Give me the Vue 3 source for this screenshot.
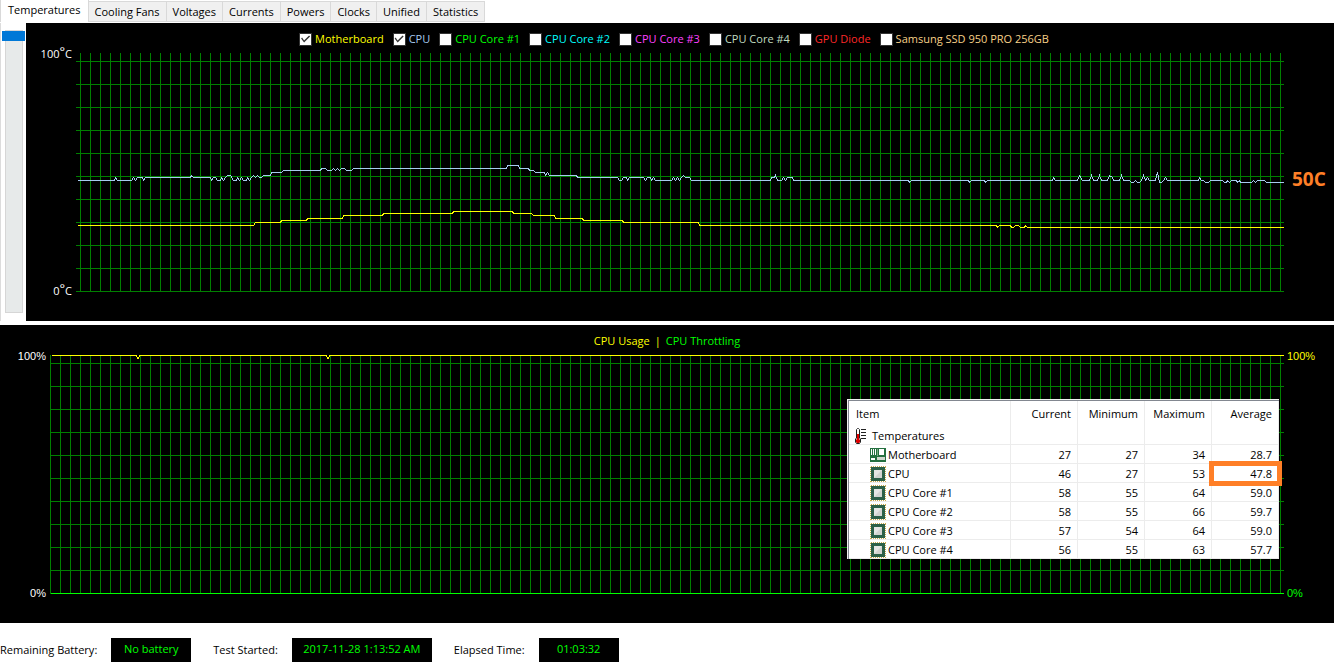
<script setup>
import { ref } from 'vue'

const tabs = ['Temperatures', 'Cooling Fans', 'Voltages', 'Currents', 'Powers', 'Clocks', 'Unified', 'Statistics']
const activeTab = ref('Temperatures')

const sensors = ref([
  { name: 'Motherboard', tone: 'yellow', on: true },
  { name: 'CPU', tone: 'sky', on: true },
  { name: 'CPU Core #1', tone: 'green', on: false },
  { name: 'CPU Core #2', tone: 'cyan', on: false },
  { name: 'CPU Core #3', tone: 'magenta', on: false },
  { name: 'CPU Core #4', tone: 'mint', on: false },
  { name: 'GPU Diode', tone: 'red', on: false },
  { name: 'Samsung SSD 950 PRO 256GB', tone: 'sand', on: false },
])

const scroll = ref(0)

const range = (start, end, step) =>
  Array.from({ length: Math.floor((end - start) / step) + 1 }, (_, i) => start + i * step)

const rows = range(61, 291, 23)
const tempGrid = [
  ...range(80, 1280, 10).map((x) => `M${x} 53V292`),
  ...rows.map((y) => `M76 ${y}H1284`),
].join('')
const usageGrid = [
  ...range(50, 1280, 10).map((x) => `M${x} 53V292`),
  ...rows.map((y) => `M50 ${y}H1284`),
].join('')

const cpuLine =
  '78,180 114,180 115,177 117,180 131,180 133,177 135,180 137,177 142,177 143,180 145,177 190,177 191,175 193,177 210,177 211,180 213,177 215,177 217,180 220,180 221,177 223,180 225,177 227,175 230,175 233,180 236,180 237,177 239,180 241,177 243,180 246,180 247,177 249,180 251,177 253,175 255,177 257,175 259,177 261,177 263,175 270,175 271,172 281,172 283,170 320,170 321,168 325,168 327,170 331,170 333,168 335,170 337,168 339,170 341,168 344,168 346,170 351,170 353,168 ' +
  '506,168 507,165 518,165 519,168 528,168 529,170 533,170 535,172 544,172 545,175 547,172 549,175 576,175 577,177 617,177 619,180 621,180 623,177 626,177 627,180 629,177 643,177 645,180 647,177 650,177 651,180 653,177 655,180 671,180 673,177 675,180 677,177 679,180 681,177 683,175 685,177 689,177 691,180 770,180 771,177 774,177 775,175 777,180 781,180 783,177 785,180 787,177 792,177 793,180 ' +
  '908,180 909,182 911,180 968,180 969,182 971,180 984,180 985,182 987,180 1052,180 1053,177 1055,180 1077,180 1079,175 1082,180 1089,180 1091,175 1093,180 1097,180 1099,175 1101,180 1107,180 1109,175 1112,177 1113,180 1119,180 1121,175 1123,180 1129,180 1131,182 1133,182 1135,180 1137,182 1139,182 1141,180 1143,175 1145,180 1147,177 1149,180 1155,180 1157,172 1159,182 1161,182 1163,180 1165,177 1167,180 1198,180 1199,177 1201,180 1203,180 1205,182 1208,182 1210,180 1222,180 1224,182 1226,182 1227,180 1229,182 1231,180 1236,180 1237,182 1239,180 1240,182 1251,182 1253,180 1255,182 1257,180 1264,180 1266,182 1284,182'
const boardLine =
  '78,225 253,225 255,222 280,222 281,220 306,220 307,218 342,218 343,215 382,215 383,213 452,213 453,211 512,211 513,213 531,213 533,215 554,215 555,218 582,218 583,220 622,220 623,222 698,222 699,225 996,225 997,227 999,225 1010,225 1011,227 1013,227 1015,225 1018,225 1020,227 1024,227 1025,225 1027,227 1284,227'
const usageLine = '52,53 136,53 137,56 138,56 139,53 326,53 327,56 328,56 329,53 1284,53'

const columns = ['Current', 'Minimum', 'Maximum', 'Average']
const stats = [
  { name: 'Motherboard', values: ['27', '27', '34', '28.7'] },
  { name: 'CPU', values: ['46', '27', '53', '47.8'] },
  { name: 'CPU Core #1', values: ['58', '55', '64', '59.0'] },
  { name: 'CPU Core #2', values: ['58', '55', '66', '59.7'] },
  { name: 'CPU Core #3', values: ['57', '54', '64', '59.0'] },
  { name: 'CPU Core #4', values: ['56', '55', '63', '57.7'] },
]
const isMarked = (row, i) => row.name === 'CPU' && i === 3
</script>

<template>
  <main class="page">
    <section class="tabbed">
      <nav class="tabs" role="tablist">
        <button
          v-for="tab in tabs"
          :key="tab"
          type="button"
          role="tab"
          class="tab"
          :class="{ active: tab === activeTab }"
          :aria-selected="tab === activeTab"
          @click="activeTab = tab"
        >{{ tab }}</button>
      </nav>

      <div class="temperature-view">
        <input v-model="scroll" class="rail" type="range" min="0" max="100" aria-label="Graph range" />
        <div class="chart">
          <div class="legend">
            <label v-for="s in sensors" :key="s.name" class="sensor" :class="s.tone">
              <input v-model="s.on" type="checkbox" class="tick" />{{ s.name }}
            </label>
          </div>
          <div class="plot-row">
            <div class="scale left">
              <span>100<span class="deg">°</span>C</span>
              <span>0<span class="deg">°</span>C</span>
            </div>
            <svg class="plot" viewBox="76 53 1208 239" preserveAspectRatio="none" aria-hidden="true">
              <g transform="translate(0.5 0.5)">
                <path class="grid" :d="tempGrid" />
                <polyline class="line board" :points="boardLine" />
                <polyline class="line cpu" :points="cpuLine" />
              </g>
            </svg>
            <div class="note">50C</div>
          </div>
        </div>
      </div>
    </section>

    <section class="chart usage">
      <div class="legend titles">
        <span class="yellow">CPU Usage</span>
        <span class="yellow">|</span>
        <span class="green">CPU Throttling</span>
      </div>
      <div class="plot-row">
        <div class="scale left percent"><span>100%</span><span>0%</span></div>
        <svg class="plot" viewBox="50 53 1234 239" preserveAspectRatio="none" aria-hidden="true">
          <g transform="translate(0.5 0.5)">
            <path class="grid" :d="usageGrid" />
            <path class="line throttle" d="M51 291H1284" />
            <polyline class="line board" :points="usageLine" />
          </g>
        </svg>
        <div class="scale right percent"><span class="yellow">100%</span><span class="green">0%</span></div>
      </div>

      <div class="stats">
        <table>
          <thead>
            <tr>
              <th class="item" scope="col">Item</th>
              <th v-for="c in columns" :key="c" scope="col">{{ c }}</th>
            </tr>
          </thead>
          <tbody>
            <tr>
              <td class="item">
                <div class="entry group">
                  <svg class="icon" viewBox="0 0 16 16" aria-hidden="true">
                    <path d="M2.500 1.500l1-1h1l1 1V10l1 1v3l-1 1.500h-3l-1-1.500v-3l1-1z" fill="#fff" stroke="#222" />
                    <path d="M3 6h2v5l1 1v2l-1 1H3l-1-1v-2l1-1z" fill="#e00000" />
                    <path d="M7 1.500h5M7 4.500h5M7 7.500h5M7 10.500h5" stroke="#222" fill="none" />
                  </svg>
                  Temperatures
                </div>
              </td>
              <td v-for="c in columns" :key="c"></td>
            </tr>
            <tr v-for="row in stats" :key="row.name">
              <td class="item">
                <div class="entry">
                  <svg v-if="row.name === 'Motherboard'" class="icon" viewBox="0 0 16 16" aria-hidden="true">
                    <path d="M0 1h16v14H0z" fill="#257040" />
                    <path d="M1 2h1v6H1zM3 2h1v6H3zM5 2h1v6H5zM9 2h5v6H9zM1 11h4v2H1z" fill="#fff" />
                    <path d="M7 10h8v3H7z" fill="#d0d6cc" />
                    <path d="M7.500 2v7" stroke="#79aa82" fill="none" />
                  </svg>
                  <svg v-else class="icon" viewBox="0 0 16 16" aria-hidden="true">
                    <path d="M.5 1v15M15.500 1v15M1 .5h15M1 15.500h15" stroke="#c9a84c" stroke-dasharray="1 1" fill="none" />
                    <path d="M1 1h14v14H1z" fill="#2c6048" />
                    <path d="M4 4h8v8H4z" fill="#d2d3d0" />
                    <path d="M4 12V4h8z" fill="#e4e5e3" />
                  </svg>
                  {{ row.name }}
                </div>
              </td>
              <td v-for="(v, i) in row.values" :key="i" :class="{ marked: isMarked(row, i) }">{{ v }}</td>
            </tr>
          </tbody>
        </table>
      </div>
    </section>

    <footer class="status">
      <div class="field"><span>Remaining Battery:</span><output class="short">No battery</output></div>
      <div class="field"><span>Test Started:</span><output class="long">2017-11-28 1:13:52 AM</output></div>
      <div class="field"><span>Elapsed Time:</span><output class="short">01:03:32</output></div>
    </footer>
  </main>
</template>

<style>
body {
  background: #fff;
}
</style>

<style scoped>
* {
  box-sizing: border-box;
}
.page {
  font: 11px/16px "Open Sans", "Noto Sans", sans-serif;
  color: #000;
}
.tabbed {
  padding-bottom: 4px;
}
.tabs {
  display: flex;
  align-items: flex-end;
  height: 23px;
  padding-bottom: 1px;
}
.tab {
  height: 21px;
  padding: 0 6px;
  border: 1px solid #d9d9d9;
  border-left: 0;
  background: #f0f0f0;
  color: #000;
  font: inherit;
  line-height: 19px;
  white-space: nowrap;
}
.tab.active {
  height: 22px;
  padding: 0 7px 3px;
  border-left: 1px solid #d9d9d9;
  border-top: 0;
  border-bottom: 0;
  background: #fff;
}
.temperature-view {
  display: flex;
  border-left: 1px solid #dcdcdc;
}
.rail {
  appearance: none;
  writing-mode: vertical-lr;
  width: 23px;
  height: 283px;
  margin: 7px 1px 0;
  background: transparent;
}
.rail::-webkit-slider-runnable-track {
  width: 18px;
  height: 283px;
  background: #e7eaea;
  border: 1px solid #d6d6d6;
}
.rail::-webkit-slider-thumb {
  appearance: none;
  width: 23px;
  height: 10px;
  margin-left: -4px;
  background: #0078d7;
  border: 0;
}
.chart {
  flex: 1;
  min-width: 0;
  padding-bottom: 29px;
  background: #000;
  color: #fff;
}
.legend {
  display: flex;
  justify-content: center;
  align-items: center;
  gap: 9px;
  height: 30px;
  padding: 2px 12px 0 0;
  white-space: nowrap;
}
.titles {
  gap: 5px;
  padding-right: 0;
}
.sensor {
  display: flex;
  align-items: center;
  gap: 3px;
}
.tick {
  appearance: none;
  display: grid;
  place-items: center;
  width: 13px;
  height: 13px;
  margin: 0;
  border: 1px solid #333;
  background: #fff;
}
.tick:checked::after {
  content: "";
  width: 11px;
  height: 11px;
  background: #333;
  clip-path: polygon(1px 5px, 2px 4px, 4px 7px, 9px 2px, 10px 3px, 4px 9px);
}
.yellow { color: #ff0; }
.sky { color: #a6caf0; }
.green { color: #0f0; }
.cyan { color: #0ff; }
.magenta { color: #ff40ff; }
.mint { color: #c0dcc0; }
.red { color: #ff2828; }
.sand { color: #f8d288; }
.plot-row {
  display: grid;
  grid-template-columns: 50px minmax(0, 1fr) 50px;
}
.plot {
  display: block;
  width: 100%;
  height: 239px;
  shape-rendering: crispEdges;
  stroke-linecap: square;
}
.grid {
  fill: none;
  stroke: #008000;
}
.line {
  fill: none;
}
.board { stroke: #ff0; }
.cpu { stroke: #a6caf0; }
.throttle { stroke: #0f0; }
.scale {
  display: flex;
  flex-direction: column;
  justify-content: space-between;
  margin: -7px 0;
}
.left {
  align-items: flex-end;
  padding-right: 4px;
}
.right {
  padding-left: 3px;
}
.percent {
  font-family: "Liberation Sans", Arial, sans-serif;
}
.deg {
  font-size: 13px;
  line-height: 1px;
  vertical-align: 2px;
}
.note {
  align-self: center;
  padding: 12px 0 0 8px;
  color: #ff7f27;
  font-size: 19px;
  font-weight: 700;
  line-height: 24px;
}
.usage {
  position: relative;
}
.stats {
  position: absolute;
  top: 74px;
  right: 55px;
  border: 1px solid #f0f0f0;
  border-width: 1px 0 0 1px;
  color: #000;
}
table {
  width: 431px;
  border-collapse: separate;
  border-spacing: 0;
  table-layout: fixed;
  border: 1px solid #828790;
  border-width: 1px 0 0 1px;
  background: #fff;
}
th,
td {
  height: 19px;
  padding: 2px 6px 0 0;
  border: 0 solid #ececec;
  border-width: 0 1px 1px 0;
  font-weight: 400;
  line-height: 16px;
  text-align: right;
}
th {
  height: 25px;
  padding-top: 0;
  border-bottom: 0;
}
.item {
  width: 162px;
  text-align: left;
}
th.item {
  padding-left: 7px;
}
.entry {
  display: flex;
  align-items: center;
  gap: 2px;
  height: 16px;
  padding-left: 21px;
}
.group {
  padding-left: 5px;
}
.icon {
  flex: none;
  width: 16px;
  height: 16px;
}
.marked {
  outline: 5px solid #ff7f27;
  outline-offset: -2px;
}
.status {
  display: flex;
  flex-wrap: wrap;
  gap: 22px;
  padding-top: 15px;
}
.field {
  display: flex;
  align-items: center;
  gap: 14px;
}
output {
  height: 24px;
  background: #000;
  color: #0f0;
  line-height: 22px;
  text-align: center;
}
.short {
  width: 80px;
}
.long {
  width: 140px;
}
</style>
